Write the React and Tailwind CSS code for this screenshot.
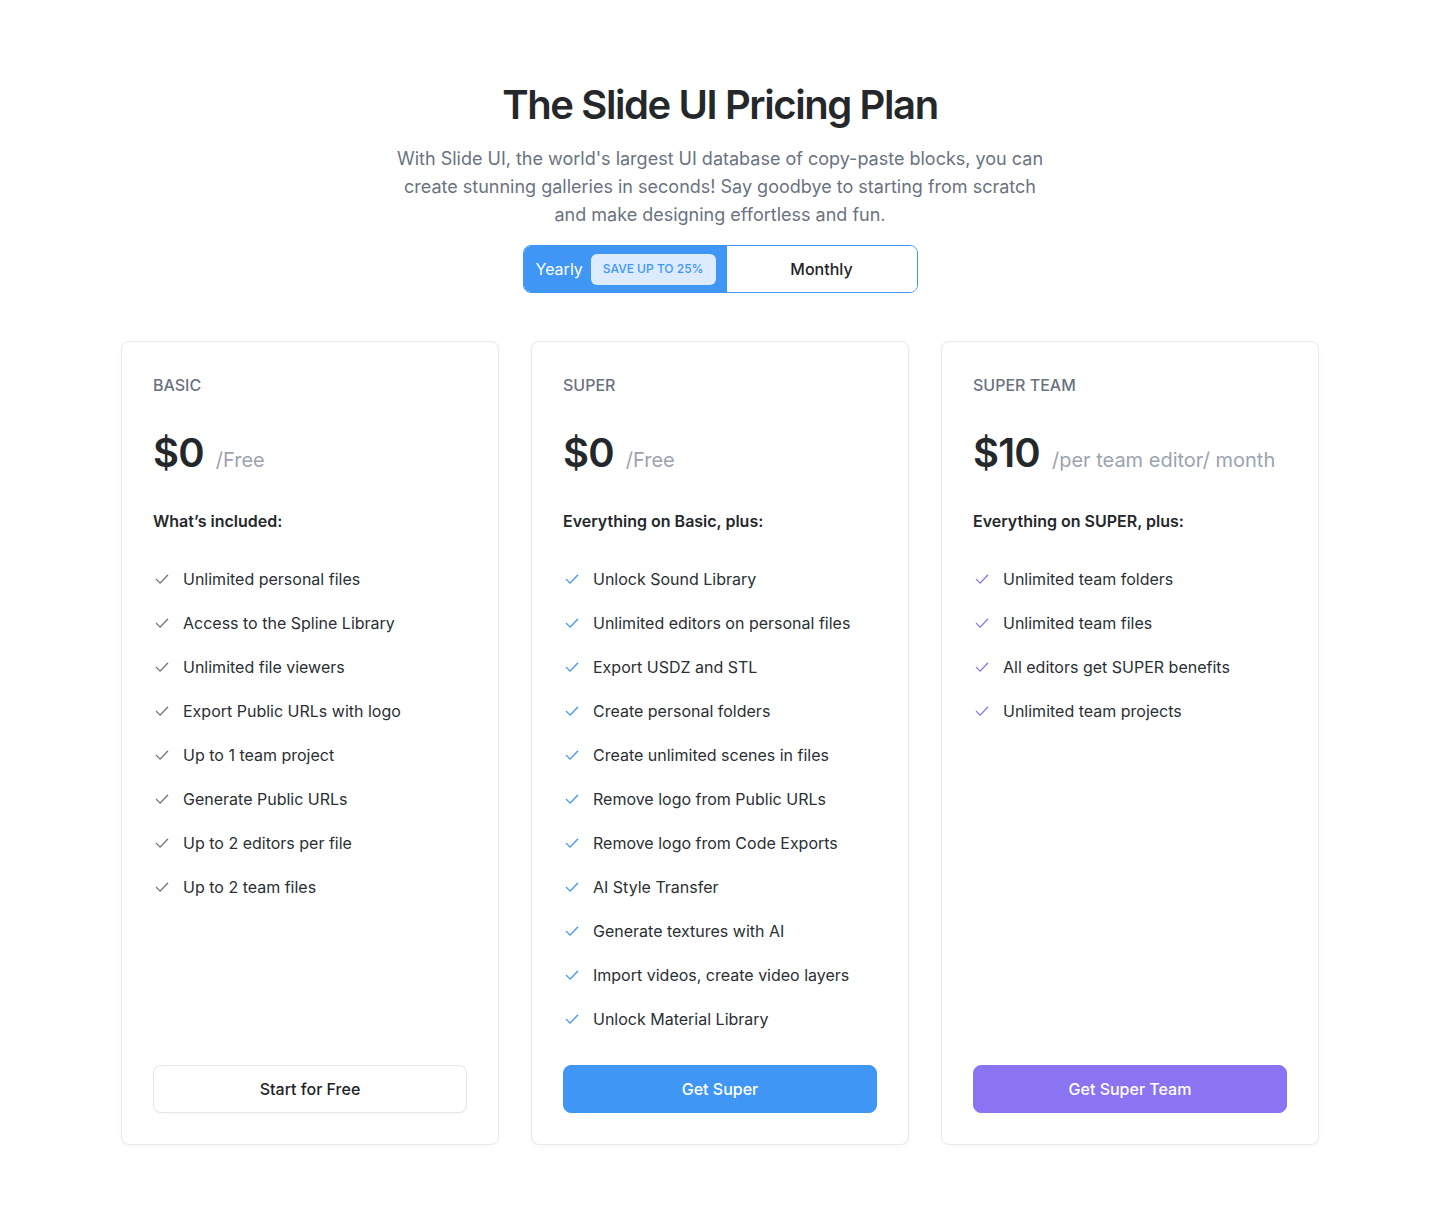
import React from "react";

const Check = ({ className }) => (
  <svg viewBox="0 0 24 24" fill="none" stroke="currentColor" strokeWidth="1.8" strokeLinecap="round" strokeLinejoin="round" className={className}>
    <path d="M4.5 12.5l5 5L19.5 7" />
  </svg>
);

const plans = [
  {
    name: "BASIC",
    price: "$0",
    unit: "/Free",
    heading: "What’s included:",
    check: "text-[#6b7280]",
    features: [
      "Unlimited personal files",
      "Access to the Spline Library",
      "Unlimited file viewers",
      "Export Public URLs with logo",
      "Up to 1 team project",
      "Generate Public URLs",
      "Up to 2 editors per file",
      "Up to 2 team files",
    ],
    button: "Start for Free",
    btnClass: "bg-white border border-[#e5e7eb] text-[#1f2328] shadow-[0_1px_2px_rgba(0,0,0,0.04)]",
  },
  {
    name: "SUPER",
    price: "$0",
    unit: "/Free",
    heading: "Everything on Basic, plus:",
    check: "text-[#4096f5]",
    features: [
      "Unlock Sound Library",
      "Unlimited editors on personal files",
      "Export USDZ and STL",
      "Create personal folders",
      "Create unlimited scenes in files",
      "Remove logo from Public URLs",
      "Remove logo from Code Exports",
      "AI Style Transfer",
      "Generate textures with AI",
      "Import videos, create video layers",
      "Unlock Material Library",
    ],
    button: "Get Super",
    btnClass: "bg-[#4096f5] border border-[#4096f5] text-white",
  },
  {
    name: "SUPER TEAM",
    price: "$10",
    unit: "/per team editor/ month",
    heading: "Everything on SUPER, plus:",
    check: "text-[#8b74f1]",
    features: [
      "Unlimited team folders",
      "Unlimited team files",
      "All editors get SUPER benefits",
      "Unlimited team projects",
    ],
    button: "Get Super Team",
    btnClass: "bg-[#8b74f1] border border-[#8b74f1] text-white",
  },
];

export default function App() {
  return (
    <div className="min-h-[1225px] bg-white font-['Inter','Liberation_Sans',sans-serif] text-[#1f2328] pt-[81px]">
      <div className="flex flex-col items-center">
        <h1 className="text-[40px] leading-[48px] font-semibold tracking-[-0.035em] text-[#25282b]">
          The Slide UI Pricing Plan
        </h1>
        <p className="mt-4 max-w-[660px] text-center text-[18px] leading-[28px] text-[#6b7280]">
          With Slide UI, the world's largest UI database of copy-paste blocks, you can create stunning galleries in seconds! Say goodbye to starting from scratch and make designing effortless and fun.
        </p>
        <div className="mt-4 flex h-[48px] w-[395px] overflow-hidden rounded-lg border border-[#4096f5]">
          <div className="flex w-[203px] items-center gap-[8px] bg-[#4096f5] pl-3 pr-3">
            <span className="text-[16px] text-white">Yearly</span>
            <span className="flex h-[31px] items-center whitespace-nowrap rounded-md bg-[#dcebfd] px-3 text-[12px] font-medium text-[#4096f5]">
              SAVE UP TO 25%
            </span>
          </div>
          <div className="flex flex-1 items-center justify-center bg-white text-[16px] font-medium text-[#1f2328]">
            Monthly
          </div>
        </div>
      </div>

      <div className="mx-auto mt-12 grid max-w-[1198px] grid-cols-3 gap-8">
        {plans.map((p) => (
          <div
            key={p.name}
            className="flex flex-col rounded-lg border border-[#e8e9ec] bg-white px-[31px] py-[31px] shadow-[0_2px_6px_rgba(0,0,0,0.03)]"
          >
            <div className="text-[16px] leading-6 font-medium text-[#6b7280]">{p.name}</div>
            <div className="mt-8 flex items-baseline gap-3">
              <span className="text-[40px] leading-[48px] font-semibold tracking-[-0.02em] text-[#25282b]">{p.price}</span>
              <span className="text-[20px] text-[#9ca3af]">{p.unit}</span>
            </div>
            <div className="mt-8 text-[16px] leading-6 font-semibold text-[#25282b]">{p.heading}</div>
            <ul className="mt-8 flex flex-col gap-4">
              {p.features.map((f) => (
                <li key={f} className="flex items-center gap-3 text-[16px] leading-7 text-[#2b2f33]">
                  <Check className={`h-[18px] w-[18px] shrink-0 ${p.check}`} />
                  <span>{f}</span>
                </li>
              ))}
            </ul>
            <div className="mt-auto pt-8">
              <button
                className={`h-[48px] w-full rounded-lg text-[16px] font-medium ${p.btnClass}`}
              >
                {p.button}
              </button>
            </div>
          </div>
        ))}
      </div>
    </div>
  );
}
